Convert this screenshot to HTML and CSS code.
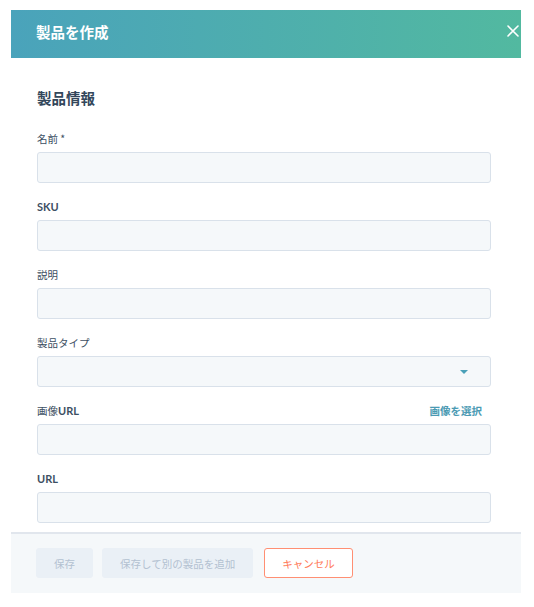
FILE: index.html
```html
<!DOCTYPE html>
<html lang="ja">
<head>
  <meta charset="UTF-8">
  <meta name="viewport" content="width=device-width, initial-scale=1.0">
  <title>製品を作成</title>
  <link rel="stylesheet" href="styles.css">
</head>
<body>
  <div class="panel">
    <header class="panel-head">
      <h1>製品を作成</h1>
      <button class="close" aria-label="閉じる">
        <svg width="12" height="12" viewBox="0 0 12 12"><path d="M1 1 L11 11 M11 1 L1 11" stroke="#fff" stroke-width="1.6" stroke-linecap="round"/></svg>
      </button>
    </header>

    <main class="panel-body">
      <h2>製品情報</h2>

      <div class="field">
        <label>名前 *</label>
        <input type="text">
      </div>
      <div class="field">
        <label><span class="en">SKU</span></label>
        <input type="text">
      </div>
      <div class="field">
        <label>説明</label>
        <input type="text">
      </div>
      <div class="field">
        <label>製品タイプ</label>
        <div class="select">
          <svg width="8" height="4" viewBox="0 0 8 4"><path d="M0 0 L8 0 L4 4 Z" fill="#4aa0b8"/></svg>
        </div>
      </div>
      <div class="field">
        <label>画像<span class="en">URL</span><a href="#" class="pick">画像を選択</a></label>
        <input type="text">
      </div>
      <div class="field">
        <label><span class="en">URL</span></label>
        <input type="text">
      </div>
    </main>

    <footer class="panel-foot">
      <button class="btn" disabled>保存</button>
      <button class="btn" disabled>保存して別の製品を追加</button>
      <button class="btn btn-cancel">キャンセル</button>
    </footer>
  </div>
</body>
</html>
```

FILE: styles.css
```css
* { box-sizing: border-box; }
body { margin: 0; background: #fff; font-family: "Noto Sans CJK JP", Lato, sans-serif; color: #33475b; }

.panel { width: 510px; margin: 10px 0 0 11px; }

.panel-head { height: 48px; display: flex; align-items: center; justify-content: space-between; padding: 0 2px 6px 25px; background: linear-gradient(90deg, #4aa3bb, #52b9a0); }
.panel-head h1 { margin: 0; font-size: 14.5px; font-weight: 700; color: #fff; }
.close { background: none; border: none; padding: 0; width: 12px; height: 12px; display: flex; cursor: pointer; }

.panel-body { padding: 30px 30px 9px 26px; }
.panel-body h2 { margin: 0 0 24px; font-size: 14.5px; line-height: 20px; font-weight: 700; color: #33475b; }

.field { margin-bottom: 17px; }
.field:last-child { margin-bottom: 0; }
.field label { display: flex; align-items: center; font-size: 10.5px; line-height: 14px; margin-bottom: 6px; color: #3d4f63; }
.field .en { font-family: Lato, sans-serif; font-weight: 700; font-size: 11px; }
.field .pick { margin-left: auto; margin-right: 9px; color: #4a9ab3; font-weight: 700; text-decoration: none; }

.field input, .select { display: block; width: 100%; height: 31px; background: #f5f8fa; border: 1px solid #d9e1ea; border-radius: 3px; }
.select { display: flex; align-items: center; justify-content: flex-end; padding-right: 22px; }

.panel-foot { display: flex; padding: 14px 25px 15px; background: #f5f8fa; border-top: 2px solid #e1e6ed; }
.btn { height: 30px; padding: 0 17px; margin-right: 9px; font-family: inherit; font-size: 10.5px; border: 1px solid #eaf0f6; border-radius: 3px; background: #eaf0f6; color: #b3c1d1; }
.btn-cancel { margin-left: 2px; background: #fff; border-color: #ff8f73; color: #ff7a59; cursor: pointer; }
```
